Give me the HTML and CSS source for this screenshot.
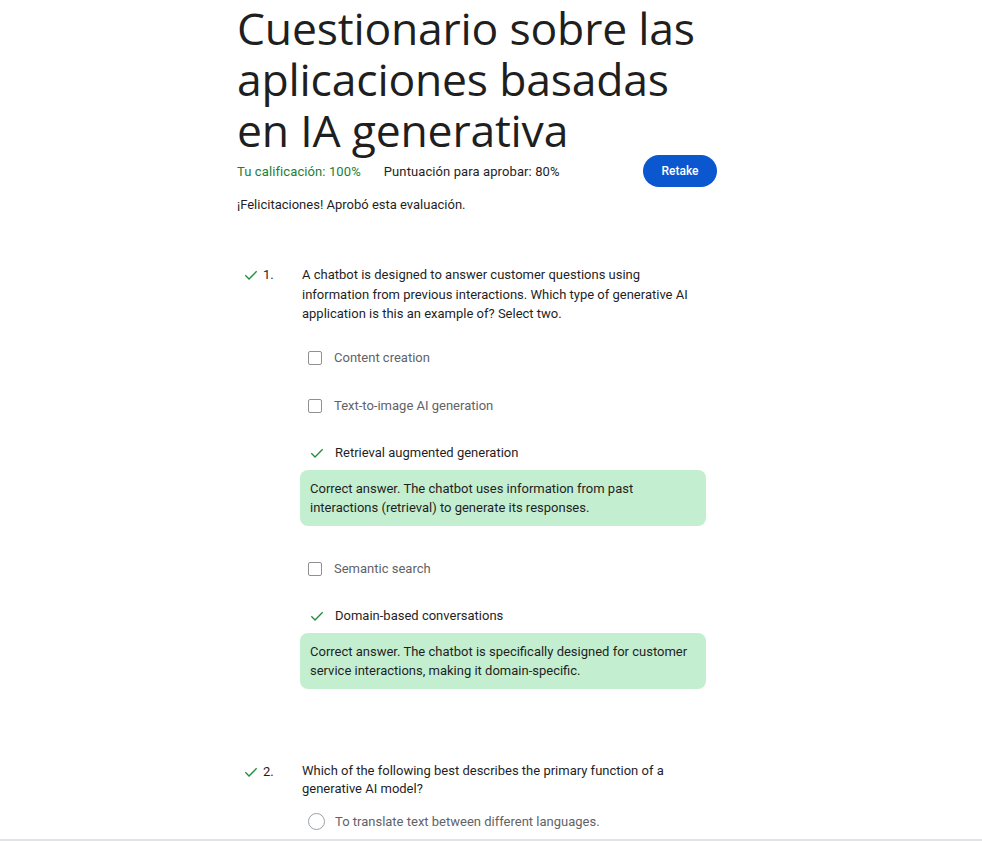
FILE: index.html
```html
<!DOCTYPE html>
<html lang="es">
<head>
<meta charset="utf-8">
<title>Cuestionario</title>
<link rel="stylesheet" href="styles.css">
</head>
<body>
<main class="page">
  <h1 class="title">Cuestionario sobre las aplicaciones basadas en IA generativa</h1>
  <div class="score-row">
    <span class="score">Tu calificación: 100%</span>
    <span class="pass">Puntuación para aprobar: 80%</span>
    <button class="retake">Retake</button>
  </div>
  <p class="congrats">¡Felicitaciones! Aprobó esta evaluación.</p>

  <section class="question q1">
    <div class="q-head">
      <svg class="q-check" viewBox="0 0 24 24" width="16" height="16"><path d="M3.5 12.5l5.5 5.5L20.5 6.5" fill="none" stroke="#1e8e3e" stroke-width="2"/></svg>
      <span class="q-num">1.</span>
    </div>
    <div class="q-body">
      <p class="q-text">A chatbot is designed to answer customer questions using information from previous interactions. Which type of generative AI application is this an example of? Select two.</p>
      <ul class="options">
        <li class="option"><span class="box"></span><span class="opt-label">Content creation</span></li>
        <li class="option"><span class="box"></span><span class="opt-label">Text-to-image AI generation</span></li>
        <li class="option correct"><svg class="opt-check" viewBox="0 0 24 24" width="16" height="16"><path d="M3.5 12.5l5.5 5.5L20.5 6.5" fill="none" stroke="#1e8e3e" stroke-width="2"/></svg><span class="opt-label">Retrieval augmented generation</span></li>
        <li class="feedback">Correct answer. The chatbot uses information from past interactions (retrieval) to generate its responses.</li>
        <li class="option"><span class="box"></span><span class="opt-label">Semantic search</span></li>
        <li class="option correct"><svg class="opt-check" viewBox="0 0 24 24" width="16" height="16"><path d="M3.5 12.5l5.5 5.5L20.5 6.5" fill="none" stroke="#1e8e3e" stroke-width="2"/></svg><span class="opt-label">Domain-based conversations</span></li>
        <li class="feedback">Correct answer. The chatbot is specifically designed for customer service interactions, making it domain-specific.</li>
      </ul>
    </div>
  </section>

  <section class="question q2">
    <div class="q-head">
      <svg class="q-check" viewBox="0 0 24 24" width="16" height="16"><path d="M3.5 12.5l5.5 5.5L20.5 6.5" fill="none" stroke="#1e8e3e" stroke-width="2"/></svg>
      <span class="q-num">2.</span>
    </div>
    <div class="q-body">
      <p class="q-text">Which of the following best describes the primary function of a generative AI model?</p>
      <ul class="options radios">
        <li class="option"><span class="radio"></span><span class="opt-label">To translate text between different languages.</span></li>
      </ul>
    </div>
  </section>
</main>
<div class="bottom-bar"></div>
</body>
</html>
```
FILE: styles.css
```css
* { box-sizing: border-box; }
html, body { margin: 0; padding: 0; background: #fff; }
body {
  font-family: Roboto, "Liberation Sans", Arial, sans-serif;
  color: #1f1f1f;
  font-size: 13px;
  overflow: hidden;
  height: 841px;
}
.page {
  width: 480px;
  margin-left: 237px;
}
.title {
  margin: 0;
  padding-top: 2px;
  font-family: "Open Sans", Roboto, sans-serif;
  font-weight: 400;
  font-size: 44.5px;
  line-height: 51px;
  letter-spacing: -0.2px;
  color: #1f1f1f;
}
.score-row {
  display: flex;
  align-items: center;
  height: 32px;
}
.score { color: #188038; letter-spacing: 0.1px; }
.pass { margin-left: 23px; color: #1f1f1f; letter-spacing: 0.1px; }
.retake {
  margin-left: auto;
  height: 32px;
  width: 74px;
  border: none;
  border-radius: 16px;
  background: #0b57d0;
  color: #fff;
  font-family: Roboto, sans-serif;
  font-size: 12px;
  font-weight: 500;
  padding: 0;
}
.congrats {
  margin: 8px 0 0;
  line-height: 20px;
}
.question {
  display: flex;
}
.q1 { margin-top: 50px; }
.q2 { margin-top: 54px; }
.q-head {
  width: 65px;
  flex: none;
  display: flex;
  align-items: flex-start;
  height: 20px;
  padding-left: 6px;
}
.q-check { margin-top: 2px; }
.q-num { margin-left: 4px; line-height: 20px; }
.q-body { flex: 1; }
.q-text {
  margin: 0;
  line-height: 19.5px;
  width: 392px;
}
.q2 .q-text { line-height: 18.5px; }
.options {
  list-style: none;
  margin: 10px 0 0 -2px;
  padding: 0;
  width: 406px;
}
.option {
  display: flex;
  align-items: center;
  padding: 14px 0 14px 8px;
  line-height: 20px;
  color: #5f6368;
}
.option.correct { color: #1f1f1f; padding-top: 13px; padding-bottom: 7px; padding-left: 9px; }
.box {
  width: 14px;
  height: 14px;
  border: 1px solid #8e918f;
  border-radius: 2px;
  margin-right: 12px;
  flex: none;
}
.opt-check { margin-right: 10px; flex: none; }
.feedback {
  background: #c4eed0;
  border-radius: 8px;
  padding: 9px 10px;
  line-height: 19px;
  color: #1f1f1f;
  margin-bottom: 19px;
}
.radios { margin-top: 12px; }
.radios .option { padding: 1px 0 1px 8px; }
.radio {
  width: 17px;
  height: 17px;
  border: 1.5px solid #9aa0a6;
  border-radius: 50%;
  margin-right: 10px;
  flex: none;
}
.bottom-bar {
  position: fixed;
  left: 0;
  right: 0;
  bottom: 0;
  height: 2px;
  background: #e1e3e6;
}
```
